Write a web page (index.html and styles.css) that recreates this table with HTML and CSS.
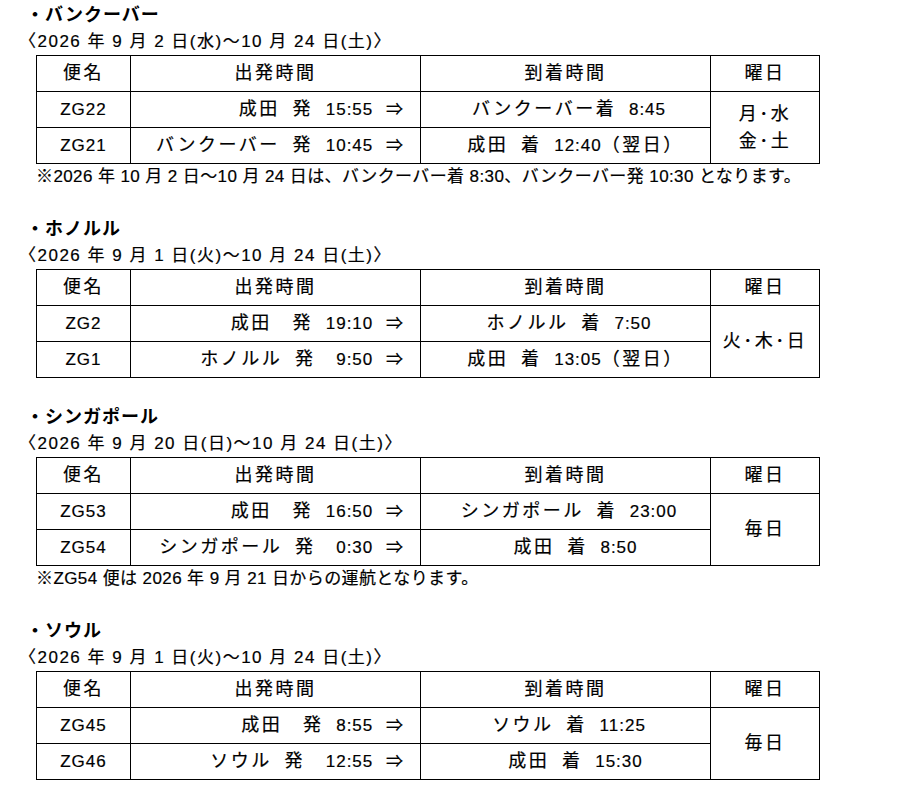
FILE: index.html
```html
<!DOCTYPE html>
<html lang="ja">
<head>
<meta charset="utf-8">
<title>運航スケジュール</title>
<link rel="stylesheet" href="styles.css">
</head>
<body>

<section class="route">
  <h2 class="route-title">・バンクーバー</h2>
  <p class="period">〈2026 年 9 月 2 日(水)～10 月 24 日(土)〉</p>
  <table class="timetable">
    <colgroup><col class="c-no"><col class="c-dep"><col class="c-arr"><col class="c-day"></colgroup>
    <tr><th><span class="j">便名</span></th><th><span class="j">出発時間</span></th><th><span class="j">到着時間</span></th><th><span class="j">曜日</span></th></tr>
    <tr><td>ZG22</td><td class="dep"><span class="j">成田</span> <span class="j">発</span> 15:55 ⇒</td><td class="arr"><span class="j">バンクーバー着</span> 8:45</td><td class="day" rowspan="2"><span class="j">月･水<br>金･土</span></td></tr>
    <tr><td>ZG21</td><td class="dep"><span class="j">バンクーバー</span> <span class="j">発</span> 10:45 ⇒</td><td class="arr home"><span class="j">成田</span> <span class="j">着</span> 12:40<span class="j">（翌日）</span></td></tr>
  </table>
  <p class="note">※2026 年 10 月 2 日～10 月 24 日は、バンクーバー着 8:30、バンクーバー発 10:30 となります。</p>
</section>

<section class="route">
  <h2 class="route-title">・ホノルル</h2>
  <p class="period">〈2026 年 9 月 1 日(火)～10 月 24 日(土)〉</p>
  <table class="timetable">
    <colgroup><col class="c-no"><col class="c-dep"><col class="c-arr"><col class="c-day"></colgroup>
    <tr><th><span class="j">便名</span></th><th><span class="j">出発時間</span></th><th><span class="j">到着時間</span></th><th><span class="j">曜日</span></th></tr>
    <tr><td>ZG2</td><td class="dep"><span class="j wide">成田</span> <span class="j">発</span> 19:10 ⇒</td><td class="arr"><span class="j">ホノルル</span> <span class="j">着</span> 7:50</td><td class="day" rowspan="2"><span class="j">火･木･日</span></td></tr>
    <tr><td>ZG1</td><td class="dep"><span class="j">ホノルル</span> <span class="j">発</span> <span class="pad">9:50</span> ⇒</td><td class="arr home"><span class="j">成田</span> <span class="j">着</span> 13:05<span class="j">（翌日）</span></td></tr>
  </table>
</section>

<section class="route">
  <h2 class="route-title">・シンガポール</h2>
  <p class="period">〈2026 年 9 月 20 日(日)～10 月 24 日(土)〉</p>
  <table class="timetable">
    <colgroup><col class="c-no"><col class="c-dep"><col class="c-arr"><col class="c-day"></colgroup>
    <tr><th><span class="j">便名</span></th><th><span class="j">出発時間</span></th><th><span class="j">到着時間</span></th><th><span class="j">曜日</span></th></tr>
    <tr><td>ZG53</td><td class="dep"><span class="j wide">成田</span> <span class="j">発</span> 16:50 ⇒</td><td class="arr"><span class="j">シンガポール</span> <span class="j">着</span> 23:00</td><td class="day" rowspan="2"><span class="j">毎日</span></td></tr>
    <tr><td>ZG54</td><td class="dep"><span class="j">シンガポール</span> <span class="j">発</span> <span class="pad">0:30</span> ⇒</td><td class="arr home"><span class="j">成田</span> <span class="j">着</span> 8:50</td></tr>
  </table>
  <p class="note">※ZG54 便は 2026 年 9 月 21 日からの運航となります。</p>
</section>

<section class="route">
  <h2 class="route-title">・ソウル</h2>
  <p class="period">〈2026 年 9 月 1 日(火)～10 月 24 日(土)〉</p>
  <table class="timetable">
    <colgroup><col class="c-no"><col class="c-dep"><col class="c-arr"><col class="c-day"></colgroup>
    <tr><th><span class="j">便名</span></th><th><span class="j">出発時間</span></th><th><span class="j">到着時間</span></th><th><span class="j">曜日</span></th></tr>
    <tr><td>ZG45</td><td class="dep"><span class="j wide">成田</span> <span class="j">発</span> 8:55 ⇒</td><td class="arr"><span class="j">ソウル</span> <span class="j">着</span> 11:25</td><td class="day" rowspan="2"><span class="j">毎日</span></td></tr>
    <tr><td>ZG46</td><td class="dep"><span class="j">ソウル</span> <span class="j">発</span> <span class="pad">12:55</span> ⇒</td><td class="arr home"><span class="j">成田</span> <span class="j">着</span> 15:30</td></tr>
  </table>
</section>

</body>
</html>
```

FILE: styles.css
```css
html, body {
  background: #fff;
}

body {
  margin: 0;
  padding: 2px 0 0 26px;
  font-family: "Liberation Sans", "Noto Sans CJK JP", sans-serif;
  font-size: 17px;
  font-weight: 400;
  color: #000;
  -webkit-text-stroke: 0.2px #000;
}

.route {
  margin-bottom: 26px;
}

.route-title {
  margin: 0;
  font-size: 18px;
  font-weight: bold;
  line-height: 26px;
  letter-spacing: 1px;
  -webkit-text-stroke: 0;
}

.period {
  margin: 0 0 0 -7px;
  line-height: 27px;
  letter-spacing: 1.5px;
}

.timetable {
  margin-left: 10px;
  border-collapse: collapse;
  table-layout: fixed;
  width: 783px;
}

.c-no { width: 94px; }
.c-dep { width: 290px; }
.c-arr { width: 290px; }
.c-day { width: 109px; }

.timetable th,
.timetable td {
  border: 1px solid #000;
  padding: 0;
  height: 35px;
  text-align: center;
  font-weight: 400;
  line-height: 20px;
  letter-spacing: 1px;
  word-spacing: 7px;
  white-space: pre;
}

.timetable .dep {
  text-align: right;
  padding-right: 16px;
}

.timetable .arr {
  padding-left: 7px;
}

.timetable .arr.home {
  padding-left: 20px;
}

.timetable .day {
  line-height: 27px;
}

.j {
  font-size: 18px;
  letter-spacing: 2.5px;
}

.j.wide {
  margin-right: 8px;
}

.pad {
  padding-left: 8px;
}

.note {
  margin: 0 0 0 10px;
  line-height: 26px;
  letter-spacing: 0.4px;
}
```
